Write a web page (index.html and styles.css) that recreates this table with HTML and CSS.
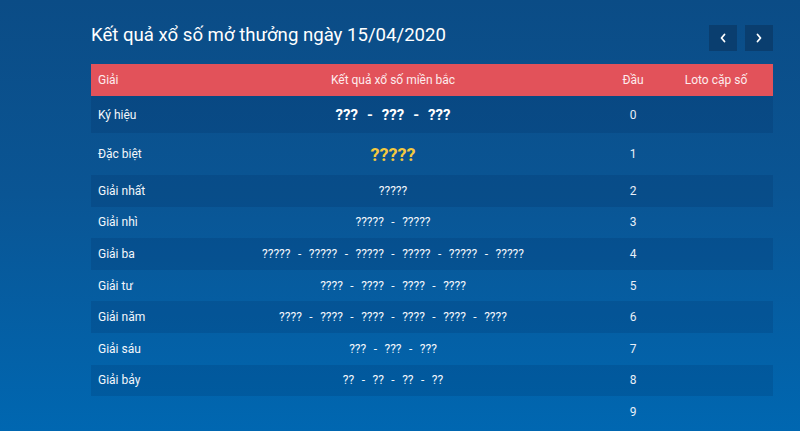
FILE: index.html
```html
<!DOCTYPE html>
<html lang="vi">
<head>
<meta charset="utf-8">
<title>Kết quả xổ số</title>
<link rel="stylesheet" href="styles.css">
</head>
<body>
<div class="page">
  <div class="topbar">
    <h1 class="title">Kết quả xổ số mở thưởng ngày 15/04/2020</h1>
    <div class="nav">
      <button class="nav-btn" aria-label="Trước"><svg width="8" height="10" viewBox="0 0 8 10"><polyline points="5.5,1.5 2.5,5 5.5,8.5" fill="none" stroke="#fff" stroke-width="1.8" stroke-linecap="round" stroke-linejoin="round"/></svg></button>
      <button class="nav-btn" aria-label="Sau"><svg width="8" height="10" viewBox="0 0 8 10"><polyline points="2.5,1.5 5.5,5 2.5,8.5" fill="none" stroke="#fff" stroke-width="1.8" stroke-linecap="round" stroke-linejoin="round"/></svg></button>
    </div>
  </div>
  <table class="results">
    <colgroup>
      <col class="c-name"><col class="c-val"><col class="c-head"><col class="c-loto">
    </colgroup>
    <thead>
      <tr><th class="left">Giải</th><th>Kết quả xổ số miền bắc</th><th>Đầu</th><th>Loto cặp số</th></tr>
    </thead>
    <tbody>
      <tr class="r-ky"><td class="name">Ký hiệu</td><td class="val big">???<span class="sep">-</span>???<span class="sep">-</span>???</td><td class="dau">0</td><td></td></tr>
      <tr class="r-db"><td class="name">Đặc biệt</td><td class="val special">?????</td><td class="dau">1</td><td></td></tr>
      <tr><td class="name">Giải nhất</td><td class="val">?????</td><td class="dau">2</td><td></td></tr>
      <tr><td class="name">Giải nhì</td><td class="val">?????<span class="sep">-</span>?????</td><td class="dau">3</td><td></td></tr>
      <tr><td class="name">Giải ba</td><td class="val">?????<span class="sep">-</span>?????<span class="sep">-</span>?????<span class="sep">-</span>?????<span class="sep">-</span>?????<span class="sep">-</span>?????</td><td class="dau">4</td><td></td></tr>
      <tr><td class="name">Giải tư</td><td class="val">????<span class="sep">-</span>????<span class="sep">-</span>????<span class="sep">-</span>????</td><td class="dau">5</td><td></td></tr>
      <tr><td class="name">Giải năm</td><td class="val">????<span class="sep">-</span>????<span class="sep">-</span>????<span class="sep">-</span>????<span class="sep">-</span>????<span class="sep">-</span>????</td><td class="dau">6</td><td></td></tr>
      <tr><td class="name">Giải sáu</td><td class="val">???<span class="sep">-</span>???<span class="sep">-</span>???</td><td class="dau">7</td><td></td></tr>
      <tr><td class="name">Giải bảy</td><td class="val">??<span class="sep">-</span>??<span class="sep">-</span>??<span class="sep">-</span>??</td><td class="dau">8</td><td></td></tr>
      <tr><td class="name"></td><td class="val"></td><td class="dau">9</td><td></td></tr>
    </tbody>
  </table>
</div>
</body>
</html>
```

FILE: styles.css
```css
html, body {
  margin: 0;
  padding: 0;
  height: 100%;
}
body {
  background: linear-gradient(180deg, #0b4c86 0%, #0a5594 45%, #0067b1 100%);
  font-family: Roboto, "Noto Sans", sans-serif;
  color: #fff;
  overflow: hidden;
}
.page {
  width: 682px;
  margin-left: 91px;
  padding-top: 25px;
}
.topbar {
  display: flex;
  justify-content: space-between;
  align-items: center;
  height: 26px;
  margin-bottom: 13px;
}
.title {
  margin: 0;
  font-size: 18.6px;
  font-weight: 400;
  line-height: 26px;
  color: #fff;
  position: relative;
  top: -3px;
}
.nav {
  display: flex;
  gap: 8px;
}
.nav-btn {
  width: 28px;
  height: 26px;
  border: 0;
  padding: 0;
  margin: 0;
  background: #0a3e6f;
  display: flex;
  align-items: center;
  justify-content: center;
}
.nav-btn svg {
  display: block;
}
.results {
  width: 682px;
  table-layout: fixed;
  border-collapse: collapse;
  border-spacing: 0;
}
.c-name { width: 88px; }
.c-val { width: 428px; }
.c-head { width: 52px; }
.c-loto { width: 114px; }
.results th {
  background: #e2525a;
  color: #fdeced;
  font-weight: 400;
  font-size: 12px;
  height: 32px;
  padding: 0;
  text-align: center;
}
.results th.left {
  text-align: left;
  padding-left: 7px;
}
.results td {
  padding: 0;
  height: 31.6px;
  font-size: 12px;
  vertical-align: middle;
}
.results tbody tr:nth-child(odd) {
  background: rgba(0, 25, 70, 0.13);
}
.results tbody tr.r-ky td { height: 37px; }
.results tbody tr.r-db td { height: 42px; }
.name {
  padding-left: 7px !important;
  color: #f4f7fb;
}
.val {
  text-align: center;
  color: #f2f6fb;
  white-space: nowrap;
}
.sep {
  display: inline-block;
  padding: 0 7.5px;
}
.big {
  font-size: 15px !important;
  font-weight: 700;
  color: #fff;
}
.big .sep {
  padding: 0 9px;
}
.special {
  font-size: 18px !important;
  font-weight: 700;
  color: #f4c93f;
}
.dau {
  text-align: center;
  font-weight: 400;
  color: #e8eff8;
}
```
